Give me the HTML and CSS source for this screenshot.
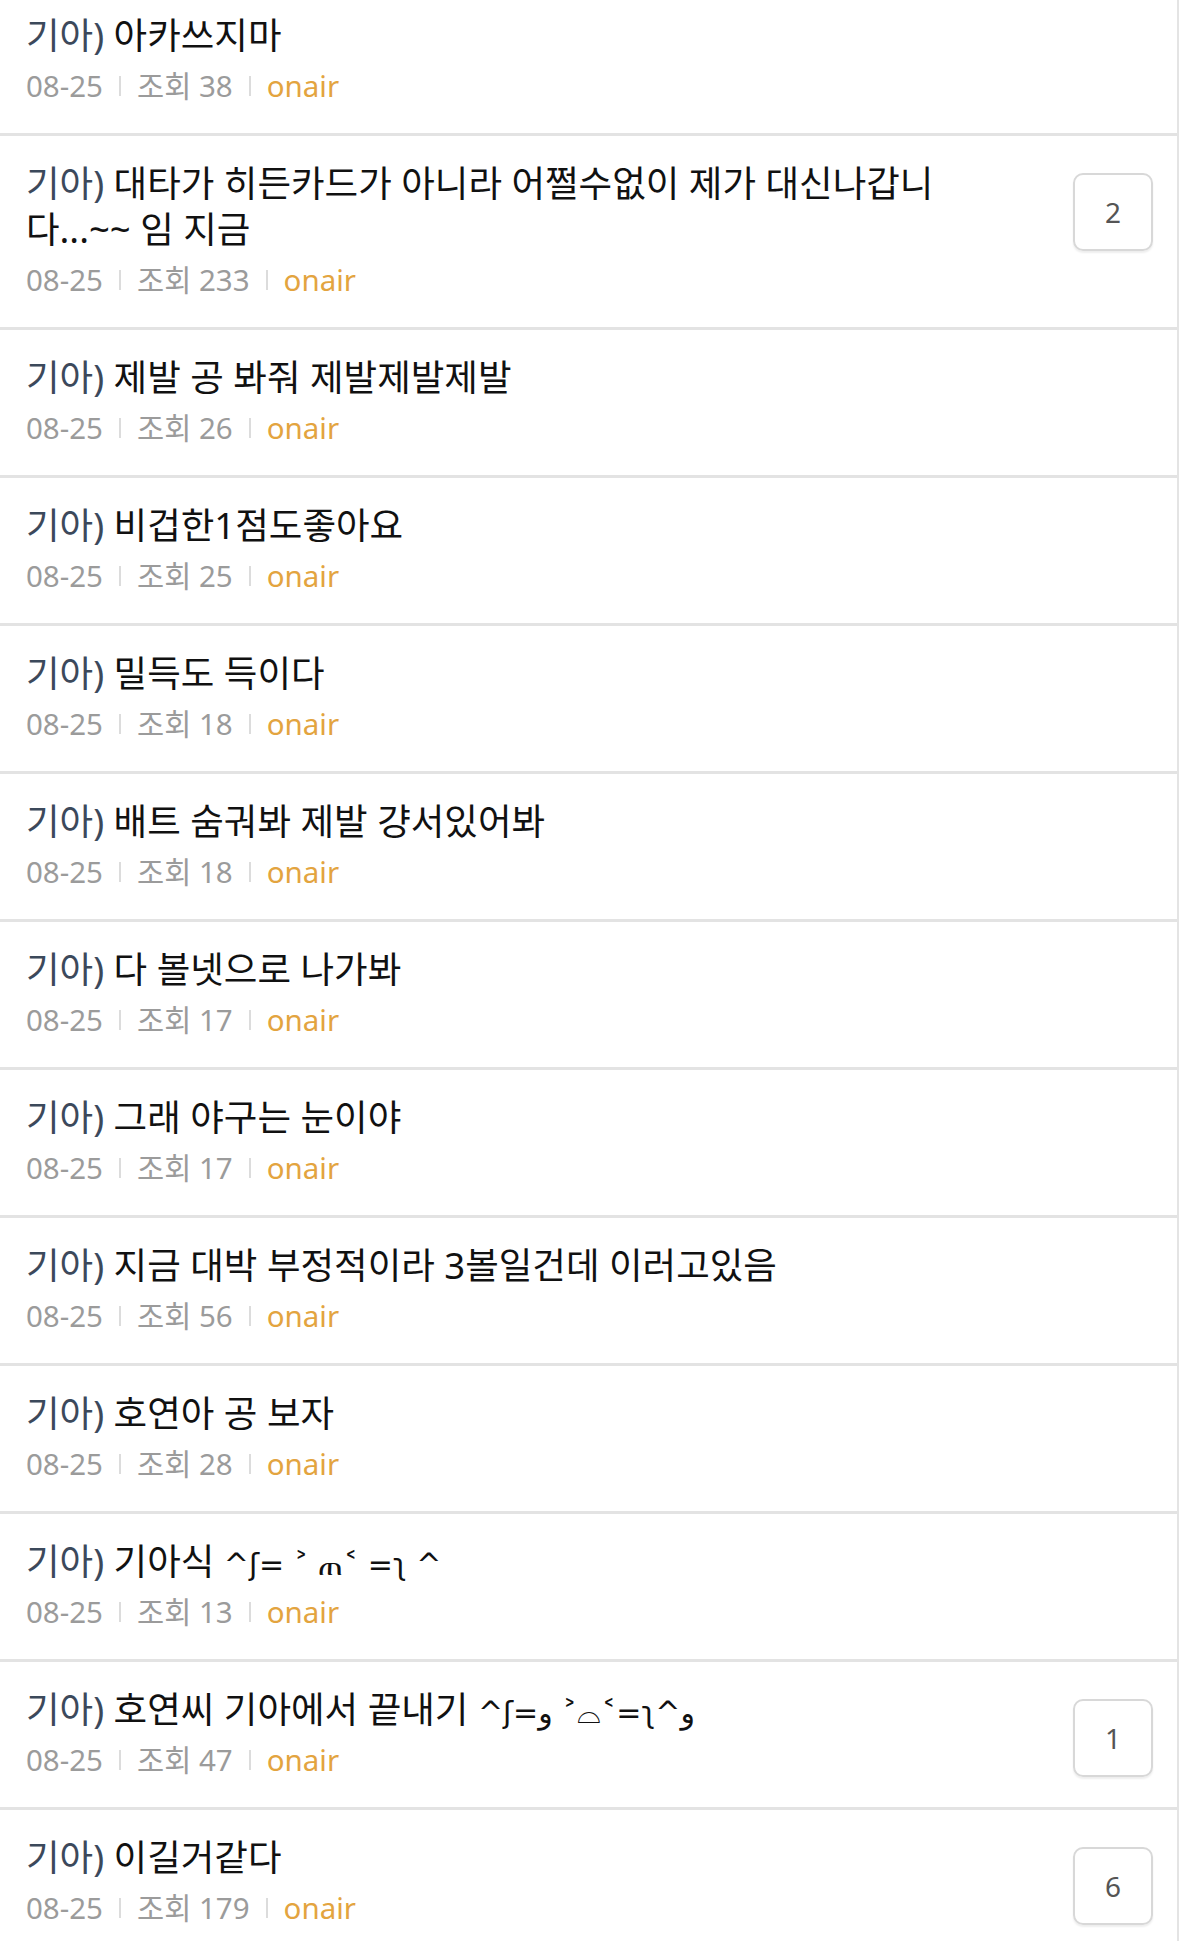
FILE: index.html
```html
<!DOCTYPE html>
<html>

<head>
    <title>야구 게시판</title>
    <link rel="stylesheet" href="styles.css">
</head>

<body>
    <ul class="board">
        <li class="post">
            <div class="post-body">
                <div class="title"><span class="tag">기아)</span> 아카쓰지마</div>
                <div class="meta">08-25<span class="bar"></span>조회 38<span class="bar"></span><span class="author">onair</span></div>
            </div>
        </li>
        <li class="post">
            <div class="post-body">
                <div class="title"><span class="tag">기아)</span> 대타가 히든카드가 아니라 어쩔수없이 제가 대신나갑니다...~~ 임 지금</div>
                <div class="meta">08-25<span class="bar"></span>조회 233<span class="bar"></span><span class="author">onair</span></div>
            </div>
            <div class="comments">2</div>
        </li>
        <li class="post">
            <div class="post-body">
                <div class="title"><span class="tag">기아)</span> 제발 공 봐줘 제발제발제발</div>
                <div class="meta">08-25<span class="bar"></span>조회 26<span class="bar"></span><span class="author">onair</span></div>
            </div>
        </li>
        <li class="post">
            <div class="post-body">
                <div class="title"><span class="tag">기아)</span> 비겁한1점도좋아요</div>
                <div class="meta">08-25<span class="bar"></span>조회 25<span class="bar"></span><span class="author">onair</span></div>
            </div>
        </li>
        <li class="post">
            <div class="post-body">
                <div class="title"><span class="tag">기아)</span> 밀득도 득이다</div>
                <div class="meta">08-25<span class="bar"></span>조회 18<span class="bar"></span><span class="author">onair</span></div>
            </div>
        </li>
        <li class="post">
            <div class="post-body">
                <div class="title"><span class="tag">기아)</span> 배트 숨궈봐 제발 걍서있어봐</div>
                <div class="meta">08-25<span class="bar"></span>조회 18<span class="bar"></span><span class="author">onair</span></div>
            </div>
        </li>
        <li class="post">
            <div class="post-body">
                <div class="title"><span class="tag">기아)</span> 다 볼넷으로 나가봐</div>
                <div class="meta">08-25<span class="bar"></span>조회 17<span class="bar"></span><span class="author">onair</span></div>
            </div>
        </li>
        <li class="post">
            <div class="post-body">
                <div class="title"><span class="tag">기아)</span> 그래 야구는 눈이야</div>
                <div class="meta">08-25<span class="bar"></span>조회 17<span class="bar"></span><span class="author">onair</span></div>
            </div>
        </li>
        <li class="post">
            <div class="post-body">
                <div class="title"><span class="tag">기아)</span> 지금 대박 부정적이라 3볼일건데 이러고있음</div>
                <div class="meta">08-25<span class="bar"></span>조회 56<span class="bar"></span><span class="author">onair</span></div>
            </div>
        </li>
        <li class="post">
            <div class="post-body">
                <div class="title"><span class="tag">기아)</span> 호연아 공 보자</div>
                <div class="meta">08-25<span class="bar"></span>조회 28<span class="bar"></span><span class="author">onair</span></div>
            </div>
        </li>
        <li class="post">
            <div class="post-body">
                <div class="title"><span class="tag">기아)</span> 기아식 <span class="face">^ʃ= ˃ ጠ˂ =ʅ ^</span></div>
                <div class="meta">08-25<span class="bar"></span>조회 13<span class="bar"></span><span class="author">onair</span></div>
            </div>
        </li>
        <li class="post">
            <div class="post-body">
                <div class="title"><span class="tag">기아)</span> 호연씨 기아에서 끝내기 <span class="face">^ʃ=و ˃⌓˂=ʅ^و</span></div>
                <div class="meta">08-25<span class="bar"></span>조회 47<span class="bar"></span><span class="author">onair</span></div>
            </div>
            <div class="comments">1</div>
        </li>
        <li class="post">
            <div class="post-body">
                <div class="title"><span class="tag">기아)</span> 이길거같다</div>
                <div class="meta">08-25<span class="bar"></span>조회 179<span class="bar"></span><span class="author">onair</span></div>
            </div>
            <div class="comments">6</div>
        </li>
    </ul>
</body>

</html>
```

FILE: styles.css
```css
body {
    margin: 0;
    background: white;
    font-family: "Noto Sans", "Noto Sans CJK KR", "DejaVu Sans", sans-serif;
    overflow: hidden;
}

.board {
    list-style: none;
    margin: 0;
    padding: 0;
    width: 1177px;
    border-right: 2px solid #e4e4e4;
}

.post {
    display: flex;
    align-items: flex-start;
    padding: 24px 24px 27px 26px;
    border-bottom: 3px solid #e3e3e3;
}

/* list is scrolled a little, first row is cut at the top */
.post:first-child {
    padding-top: 12px;
}

.post-body {
    flex: 1;
    min-width: 0;
    padding-right: 120px;
}

.title {
    font-size: 36.5px;
    line-height: 46px;
    color: #111;
    word-break: break-all;
}

.tag {
    color: #3c495b;
}

.face {
    font-family: "DejaVu Sans", sans-serif;
    font-size: 30px;
    line-height: 0;
}

.meta {
    margin-top: 8px;
    font-size: 29.5px;
    line-height: 40px;
    color: #9b9b9b;
    display: flex;
    align-items: center;
}

.bar {
    width: 2px;
    height: 20px;
    background: #dcdcdc;
    margin: 0 16px;
}

.author {
    color: #e3a43f;
}

.comments {
    flex: none;
    width: 76px;
    height: 74px;
    margin-top: 13px;
    border: 2px solid #d8d8d8;
    border-radius: 10px;
    box-shadow: 0 2px 2px rgba(0, 0, 0, 0.07);
    display: flex;
    justify-content: center;
    align-items: center;
    font-size: 28px;
    color: #555;
}
```
